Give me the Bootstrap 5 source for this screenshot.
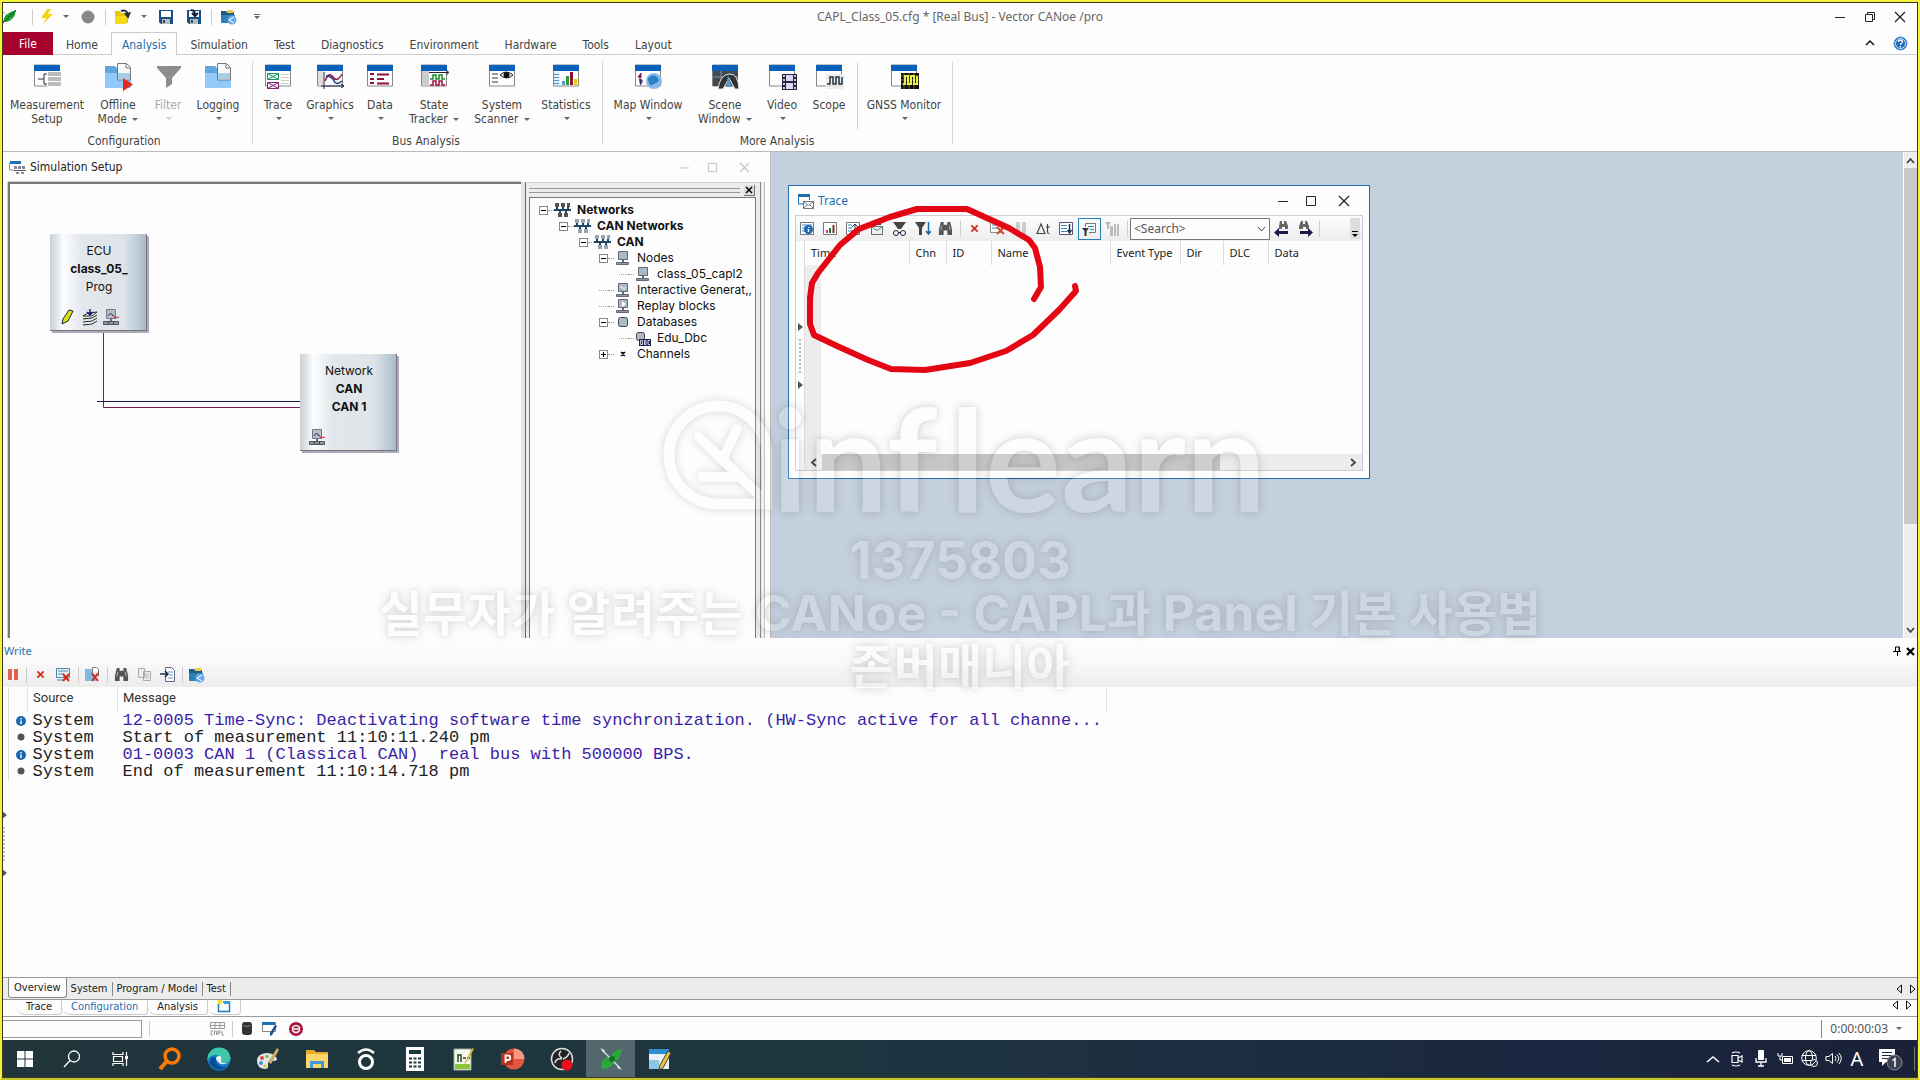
<!DOCTYPE html>
<html lang="en">
<head>
<meta charset="utf-8">
<meta name="viewport" content="width=device-width, initial-scale=1">
<title>CAPL_Class_05.cfg * [Real Bus] - Vector CANoe /pro</title>
<link href="https://cdn.jsdelivr.net/npm/bootstrap@5.3.0/dist/css/bootstrap.min.css" rel="stylesheet">
<style>
:root{--ui:"DejaVu Sans Condensed","DejaVu Sans",sans-serif;--win:"Noto Sans","Open Sans",sans-serif;--ink:#444;--blue:#1f6fae}
body{font-family:var(--ui);font-size:12px;line-height:14px;color:var(--ink);background:#fdfdfd;overflow:hidden}
button{background:none;border:0;padding:0;color:inherit;font:inherit;line-height:inherit}
svg{display:block;flex:none}
.shell{border:2px solid #f3f23c;border-bottom-color:#c4c52c;height:100vh}
.shell-in{border:1px solid #3b3b20}
.titlebar{height:29px;font-family:var(--win);padding-bottom:2px}
.titlebar .caption{font-size:12px;color:#666}
.winbtns{padding-right:2px}
.cell{width:23px;flex:none;display:flex;align-items:center;justify-content:center}
.cell-sm{width:16px}.cell-md{width:28px}.cell-lg{width:30px}.cell-xs{width:10px}.cell-pz{width:20px}
.vsep{width:6px;flex:none;display:flex;justify-content:center;align-self:center;height:16px}
.vsep::before{content:"";width:1px;background:#ccc}
.caret{width:0;height:0;border:3px solid transparent;border-top-color:#666;border-bottom:0;display:inline-block}
.rtabs{height:23px;border-bottom:1px solid #ccc}
.rtabs a{color:var(--ink);text-decoration:none;padding:5px 12px 0;height:23px;border:1px solid transparent;border-bottom:0}
.rtabs a.file{background:#a6002c;color:#fff;width:50px;padding:4px 0 0;text-align:center}
.rtabs a.on{color:var(--blue);background:#fdfdfd;border-color:#ccc;padding:5px 10px 0}
.ribbon{height:97px;border-bottom:1px solid #bbb}
.rgroup{position:relative;display:flex;flex-direction:column;padding:8px 8px 3px 0}
.rgroup.mid{padding-right:10px}
.rgroup.mid .glabel{padding-left:6px}
.rgroup.last{padding:8px 5px 3px 3px}
.rgroup::after{content:"";position:absolute;right:0;top:6px;bottom:7px;width:1px;background:#d8d8d8}
.rgroup .glabel{text-align:center;margin-top:auto}
.rbtn{display:flex;flex-direction:column;align-items:center;flex:none;height:66px}
.rbtn svg{margin:0 0 7px 3px;width:30px;height:28px}
.rbtn .caret{vertical-align:middle;margin-left:2px}
.rbtn .below{margin-top:5px}
.rbtn:disabled{color:#aaa}.rbtn:disabled .caret{border-top-color:#ccc}
.w44{width:44px}.w46{width:46px}.w50{width:50px}.w54{width:54px}.w62{width:62px}.w70{width:70px}.w74{width:74px}.w84{width:84px}.w88{width:88px}
.workspace{flex:487 1 0;min-height:0}
.simwin{flex:0 0 768px;border-right:1px solid #bbb;background:#fdfdfd}
.simhead{height:30px;padding-left:6px;color:#222}
.canvas{position:relative;width:513px;margin-left:5px;border-top:2px solid #777;border-left:2px solid #777;box-shadow:0 -1px #ccc,-1px 0 #ccc;flex:none}
.canvas>svg{position:absolute;left:0;top:0}
.blk{position:absolute;width:97px;height:97px;font-family:Inter,sans-serif;font-size:12px;line-height:18px;color:#111;text-align:center;padding:8px 0 0 2px;background:linear-gradient(90deg,#c9cfd4,#fcfdfe 14%,#e2e7ec 34%,#dfe4ea 76%,#b8c8d5 94%,#a9b9c6);border-right:1px solid #777;border-bottom:1px solid #777;box-shadow:2px 2px #aab}
.blk svg{position:absolute;bottom:4px}
.blk .i1{left:9px}.blk .i2{left:32px}.blk .i3{left:53px}
.ecu{left:40px;top:50px}.net{left:290px;top:170px}
.side{width:235px;background:#ececec;border-left:1px solid #666;margin-left:4px;box-shadow:-4px 0 #e3e3e3;padding:0 0 0 3px;border-top:1px solid #ccc}
.side-edge{border-right:1px solid #888;box-shadow:3px 0 #eee,4px 0 #bbb}
.grip{height:14px;padding-right:5px}
.grip i{flex:1;height:5px;border-top:1px solid #999;border-bottom:1px solid #999;margin-right:4px}
.grip button{width:11px;height:11px;background:#ddd;border-right:1px solid #777;border-bottom:1px solid #777}
.tree{background:#fdfdfd;border:1px solid #777;border-bottom:0;flex:1;font-family:Inter,sans-serif;line-height:16px;color:#111;padding-top:4px;white-space:nowrap;overflow:hidden}
.tree ul{list-style:none;margin:0;padding:0 0 0 20px}
.tree>ul{padding-left:9px}
.trow{display:flex;align-items:center;height:16px}
.exp{width:9px;height:9px;flex:none;border:1px solid #888;position:relative;background:#fff}
.exp::before{content:"";position:absolute;left:1px;right:1px;top:3px;height:1px;background:#000}
.exp.plus::after{content:"";position:absolute;top:1px;bottom:1px;left:3px;width:1px;background:#000}
.noexp{width:9px;flex:none;border-top:1px dotted #aaa}
.dots{width:6px;flex:none;border-top:1px dotted #999}
.trow svg{width:17px;height:16px;margin:0 6px 0 0}
.tree b{font-weight:700}
.mdi{position:relative;background:#c5d0df;min-width:0}
.vscroll{width:14px;background:#eee;border-left:1px solid #fff;flex:none}
.vscroll i{flex:0 0 356px;background:#c9c9c9}
.vscroll button{height:16px;display:flex;align-items:center;justify-content:center}
.tracewin{position:absolute;left:17px;top:33px;width:582px;height:294px;border:1px solid #1f6fae;background:#fdfdfd;padding:0 6px 7px;font-family:var(--win);font-size:11px}
.tracehead{height:29px;color:var(--blue);font-size:12px;padding-left:3px}
.tracebody{flex:1;border:1px solid #ccd;min-height:0}
.ttool{height:25px;background:linear-gradient(#fdfdfd,#ededed)}
.ttool .tgl{border:1px solid #2580b8;height:22px}
.ttool select{width:140px;height:22px;border:1px solid #777;border-radius:0;background:#fdfdfd;color:#555;font-size:12px;padding:0 3px;appearance:none;font-family:var(--win)}
.selwrap{position:relative}.selwrap svg{position:absolute;right:4px;top:8px;pointer-events:none}
.ovf{width:10px;height:21px;background:#ddd;display:flex;align-items:flex-end;justify-content:center;margin-right:2px}
.gripcol{width:9px;border-right:1px solid #ddd;flex:none}
.gripdots{height:34px;border-left:2px dotted #bbb}
.tbl-trace{table-layout:fixed;border-collapse:collapse;color:#222;width:100%}
.tbl-trace th{font-weight:400;height:24px;padding:0 6px;border-right:1px solid #ddd;white-space:nowrap}
.tbl-trace th:last-child{border-right:0}
.gutter{width:16px;background:#ececec}
.hscroll{height:16px;background:#ececec}
.hscroll i{flex:0 0 398px;background:#c6c6c6}
.hscroll button{width:17px;height:16px;display:flex;align-items:center;justify-content:center}
.ink{position:absolute;left:0;top:0;pointer-events:none;z-index:3}
.wm{position:absolute;left:0;right:0;top:398px;z-index:4;pointer-events:none;opacity:.15;color:#fff;text-shadow:0 0 12px #000,0 0 4px #555;font:700 48px/53px Inter,"Noto Sans CJK KR",sans-serif}
.wm .logo{height:133px;padding-left:10px}
.wm .logo svg{filter:drop-shadow(0 0 5px #000);overflow:visible}
.wm .word{font:700 142px/112px Lato,sans-serif;font-variant-ligatures:none;gap:12px}
.wm .num{font-size:52px}
.wm .lat{font-size:50px;line-height:1}
.writepane{flex:339 1 0;min-height:0;overflow:hidden}
.writehead{background:linear-gradient(#fdfdfd,#f9f9f9 50%,#ececec)}
.writehead .wt{height:24px;padding:2px 2px 0 1px;color:var(--blue);font:11px/16px var(--win)}
.wtool{height:25px}
.wlog{border-collapse:collapse;font-family:"Liberation Mono",monospace;font-size:17px;line-height:17px;color:#222;margin-left:5px;border-left:1px solid #ddd}
.wlog th{font:400 13px/22px Roboto,sans-serif;color:#333;border-right:1px solid #e2e2e2;height:25px;vertical-align:top}
.wlog th,.wlog td{padding:0 5px;white-space:pre}
.wlog th.src{width:90px}
.wlog td:first-child,.wlog th:first-child{padding:0 1px 0 7px;width:19px}
.wlog .info{color:#3a1fa8}
.btabs{height:23px;background:#ececec;border-top:1px solid #999;border-bottom:1px solid #999;font-size:11px;color:#222}
.btabs a,.dtabs a{color:inherit;text-decoration:none}
.btabs a{border-right:1px solid #888;padding:0 4px;line-height:14px}
.btabs a.on{background:#fdfdfd;border:1px solid #888;border-top:0;border-radius:0 0 3px 3px;height:20px;line-height:20px;margin-left:5px;padding:0 5px;align-self:flex-start}
.dtabs{height:17px;border-bottom:1px solid #999;font-size:11px;color:#222;flex:none;padding-left:14px}
.dtabs a{padding:0 9px;line-height:14px;height:15px;border-bottom:1px solid #ccc;border-right:1px solid #ccc;border-radius:0 0 4px 8px}
.dtabs a.on{color:var(--blue)}
.pager{gap:6px}
.statusbar{height:23px;flex:none}
.statusbar input{width:139px;height:18px;border:1px solid #999;border-left:0;background:#fdfdfd;padding:0 4px}
.clock{border-left:1px solid #888;padding:0 15px 0 8px;height:18px;font:12px/18px var(--win);color:#555}
.taskbar{height:37px;flex:none;background:linear-gradient(90deg,#20363b,#1e3540 45%,#1a2740 80%,#1a2138)}
.taskbar .tb{width:49px;height:37px;display:flex;align-items:center;justify-content:center}
.taskbar .tb:first-child{width:44px}
.taskbar .tb.on{background:#53686c}
.tray{color:#fff;font:20px/36px "Noto Sans",sans-serif;padding-right:2px}
.tray .cell{width:24px}
.tray .note{width:46px;border-right:1px solid #777;padding-right:4px}
</style>
<script src="https://cdn.jsdelivr.net/npm/bootstrap@5.3.0/dist/js/bootstrap.bundle.min.js"></script>
</head>
<body>
<svg width="0" height="0" class="position-absolute" aria-hidden="true">
<defs>
<symbol id="win" viewBox="0 0 30 28"><path d="M.5 2h25v21H.5z" fill="#fdfdfd" stroke="#888"/><path d="M0 2h26v6H0z" fill="#0a61bb"/></symbol>
<symbol id="folder" viewBox="0 0 30 28"><path d="M0 3h10l3 3h13v19H0z" fill="#5ea7dc"/><path d="M0 10h26v15H0z" fill="#92c9f8"/><path d="M12.500.5h9l4 4V17h-13z" fill="#f6fafc" stroke="#777"/><path d="M13 10h12v6H13z" fill="#a6cfe2"/><path d="M21 .5V5h4.500" fill="none" stroke="#777"/></symbol>
<symbol id="netico" viewBox="0 0 17 16"><path d="M1 1h4v4H1zM7 1h4v4H7zM13 1h3v4h-3zM4 11h4v4H4zM10 11h4v4h-4z" fill="#99a5ae"/><path d="M0 8h17M3 5v3M9 5v3M14 5v3M6 8v3M12 8v3" stroke="#1f4765" stroke-width="2"/></symbol>
<symbol id="netdark" viewBox="0 0 17 16"><path d="M1 1h4v4H1zM7 1h4v4H7zM13 1h3v4h-3zM4 11h4v4H4zM10 11h4v4h-4z" fill="#555"/><path d="M0 8h17M3 5v3M9 5v3M14 5v3M6 8v3M12 8v3" stroke="#1f4765" stroke-width="2"/></symbol>
<symbol id="pc" viewBox="0 0 17 16"><path d="M4.500 1.500h9v8h-9z" fill="#a9bac6" stroke="#667"/><path d="M8 10h2v3H8z" fill="#667"/><path d="M2.500 12.500h12v2h-12z" fill="#8b979f" stroke="#667"/></symbol>
<symbol id="pcred" viewBox="0 0 17 18"><path d="M3.500 1.500h9v9h-9z" fill="#b4bec6" stroke="#778"/><path d="M7 11h2v3H7z" fill="#667"/><path d="M.500 13.500h15v3H.500z" fill="#8b979f" stroke="#556"/><path d="M5.500 14v2M10.500 14v2" stroke="#445"/><path d="M5 8q3-5 5 0" fill="none" stroke="#334"/><path d="M10 7l2 3 4-1" fill="none" stroke="#c22"/></symbol>
<symbol id="bino" viewBox="0 0 16 16"><path d="M3 1h3v3h4V1h3l2 8v6h-5v-5H6v5H1V9z" fill="#555"/><path d="M4 5l-1 5M12 5l1 5" stroke="#bbb"/></symbol>
<symbol id="redx" viewBox="0 0 10 10"><path d="M1.500 1.500l7 7M8.500 1.500l-7 7" stroke="#d92b1c" stroke-width="2"/></symbol>
<symbol id="disk" viewBox="0 0 16 16"><path d="M1 1h14v14H3l-2-2z" fill="#174f86"/><path d="M3 2h10v6H3z" fill="#fff"/><path d="M4 10h8v5H4z" fill="#bbb"/><path d="M5 11h2v3H5z" fill="#174f86"/></symbol>
<symbol id="fold2" viewBox="0 0 17 16"><path d="M1 2h5l1 1h7v11H1z" fill="#245b80"/><path d="M7 1h6v3H7z" fill="#e5c94f"/><path d="M1 6h14v8H1z" fill="#2b80b5"/><circle cx="12" cy="11" r="4.500" fill="#69abe8"/><path d="M9 11l5-3M9 11l5 3" stroke="#fff"/></symbol>
<symbol id="min" viewBox="0 0 12 12"><path d="M1 6.500h10" stroke="currentColor"/></symbol>
<symbol id="max" viewBox="0 0 12 12"><path d="M1.500 1.500h9v9h-9z" fill="none" stroke="currentColor"/></symbol>
<symbol id="cls" viewBox="0 0 12 12"><path d="M1 1l10 10M11 1L1 11" stroke="currentColor" stroke-width="1.300"/></symbol>
<symbol id="lt" viewBox="0 0 8 10"><path d="M6.500 1v8L2 5z" fill="none" stroke="#111"/></symbol>
<symbol id="rt" viewBox="0 0 8 10"><path d="M1.500 1v8L6 5z" fill="none" stroke="#111"/></symbol>
<symbol id="gr" viewBox="0 0 5 8"><path d="M0 0l5 4-5 4z" fill="#555"/></symbol>
</defs>
</svg>
<div class="shell">
<div class="shell-in d-flex flex-column h-100 position-relative">

<header class="titlebar d-flex align-items-center position-relative flex-shrink-0">
 <button class="cell-sm" aria-label="CANoe"><svg width="14" height="16"><path d="M0 13Q1 4 13 1 12 11 3 13z" fill="#1d9a2c"/><path d="M0 3l13 11" stroke="#9aa" stroke-dasharray="3 6"/><path d="M0 14L13 1" stroke="#0b5e17"/></svg></button>
 <span class="cell-xs"></span><span class="vsep ms-n1"></span>
 <button class="cell" aria-label="Start"><svg width="14" height="16"><path d="M7 0h4L8 5h5L3 15l3-6H1z" fill="#f6d31a"/></svg></button>
 <span class="cell-sm d-flex justify-content-center"><i class="caret"></i></span>
 <button class="cell-md d-flex justify-content-center" aria-label="Stop"><svg width="14" height="14"><circle cx="7" cy="7" r="6.500" fill="#8a8a8a"/></svg></button>
 <span class="vsep"></span>
 <button class="cell-md d-flex justify-content-center" aria-label="Open"><svg width="17" height="16"><path d="M1 2h5l1 2h7v10H1z" fill="#e9c400"/><path d="M1 7h13l-2 8H1z" fill="#f5da1c"/><path d="M7 2q6-2 7 4M11 4l3 4 2-5" fill="none" stroke="#234" stroke-width="2"/></svg></button>
 <span class="cell-sm d-flex justify-content-center"><i class="caret"></i></span>
 <button class="cell-md d-flex justify-content-center" aria-label="Save"><svg width="16" height="16"><use href="#disk"/></svg></button>
 <button class="cell-md d-flex justify-content-center" aria-label="Save as"><svg width="16" height="16"><use href="#disk"/><path d="M5 1q4 0 4 5M6 4l3 3 3-3" fill="none" stroke="#123" stroke-width="2"/></svg></button>
 <span class="vsep"></span>
 <button class="cell-md d-flex justify-content-center" aria-label="Share folder"><svg width="17" height="16"><use href="#fold2"/></svg></button>
 <button class="cell-lg d-flex justify-content-center" aria-label="Customize"><svg width="8" height="8"><path d="M1 1.500h6" stroke="#666"/><path d="M1 3h6L4 6z" fill="#666"/></svg></button>
 <span class="caption position-absolute start-50 translate-middle-x">CAPL_Class_05.cfg * [Real Bus] - Vector CANoe /pro</span>
 <span class="ms-auto d-flex text-dark winbtns">
  <button class="cell-lg d-flex justify-content-center" aria-label="Minimize"><svg width="12" height="12"><use href="#min"/></svg></button>
  <button class="cell-lg d-flex justify-content-center" aria-label="Restore"><svg width="12" height="12"><path d="M1.500 3.500h7v7h-7zM3.500 3V1.500h7v7H9" fill="none" stroke="currentColor"/></svg></button>
  <button class="cell-lg d-flex justify-content-center" aria-label="Close"><svg width="12" height="12"><use href="#cls"/></svg></button>
 </span>
</header>

<nav class="rtabs d-flex flex-shrink-0">
 <a href="#" class="file">File</a><a href="#">Home</a><a href="#" class="on">Analysis</a><a href="#">Simulation</a><a href="#">Test</a><a href="#">Diagnostics</a><a href="#">Environment</a><a href="#">Hardware</a><a href="#">Tools</a><a href="#">Layout</a>
 <span class="ms-auto d-flex align-items-center winbtns">
  <button class="cell-lg d-flex justify-content-center" aria-label="Collapse ribbon"><svg width="10" height="8"><path d="M1 6l4-4 4 4" fill="none" stroke="#111" stroke-width="1.500"/></svg></button>
  <button class="cell-lg d-flex justify-content-center" aria-label="Help"><svg width="15" height="15"><circle cx="7.500" cy="7.500" r="6.500" fill="#1d6bb8" stroke="#4e93d4"/><circle cx="7.500" cy="7.500" r="5" fill="none" stroke="#cfe3f5"/><path d="M5.500 6q0-2 2-2t2 2q0 1-2 2v1M7.500 10v1.500" fill="none" stroke="#fff" stroke-width="1.300"/></svg></button>
 </span>
</nav>

<div class="ribbon d-flex flex-shrink-0">
 <section class="rgroup">
  <div class="d-flex">
   <button class="rbtn w88"><svg><use href="#win"/><path d="M13 8h14v18H13z" fill="#fdfdfd"/><path d="M14 9h13v4H14zM14 14h13v4H14zM14 19h13v4H14z" fill="#bbb"/><path d="M4 16h6M10 11v10h3M10 11h3" fill="none" stroke="#234"/></svg><span>Measurement<br>Setup</span></button>
   <button class="rbtn w54"><svg><use href="#folder"/><path d="M18 15l10 6.500-10 6.500z" fill="#e5261b"/></svg><span>Offline<br>Mode <i class="caret"></i></span></button>
   <button class="rbtn w46" disabled><svg><path d="M2 3h24v2l-9 10v6l-6 4V15L2 5z" fill="#8d8d8d"/></svg><span>Filter</span><i class="caret below"></i></button>
   <button class="rbtn w54"><svg><use href="#folder"/></svg><span>Logging</span><i class="caret below"></i></button>
  </div>
  <div class="glabel">Configuration</div>
 </section>
 <section class="rgroup mid">
  <div class="d-flex">
   <button class="rbtn w50"><svg><use href="#win"/><path d="M2.500 10.500h11v6h-11zM2.500 10.500l11 6M13.500 10.500l-11 6" fill="#eafaf2" stroke="#1f9363"/><path d="M2.500 19.500h11v6h-11zM2.500 19.500l11 6M13.500 19.500l-11 6" fill="#fbeefb" stroke="#7d2670"/><path d="M16 11.500h8M16 14.500h8M16 17.500h8M16 20.500h8" stroke="#ccc"/></svg><span>Trace</span><i class="caret below"></i></button>
   <button class="rbtn w54"><svg><use href="#win"/><path d="M1 8h5v15H1z" fill="#ddd"/><path d="M7 9v17M4 23h23M24 21l3 2-3 2" fill="none" stroke="#224"/><path d="M8 18q4-10 8-4t9-3" fill="none" stroke="#9a1240" stroke-width="1.500"/><path d="M9 13q6 0 8 5t8 0" fill="none" stroke="#1c3a78" stroke-width="1.500"/></svg><span>Graphics</span><i class="caret below"></i></button>
   <button class="rbtn w46"><svg><use href="#win"/><path d="M3 11h4M3 16h4M3 20h4M10 11.500h12M10 16h7M10 20.500h12" stroke="#8c0f3c" stroke-width="2.200"/></svg><span>Data</span><i class="caret below"></i></button>
   <button class="rbtn w62"><svg><use href="#win"/><path d="M1 8h7v15H1z" fill="#ccc"/><path d="M8 9.500h19M25 7l3 2.500-3 2.500" fill="none" stroke="#223"/><path d="M9 16h3v-4h3v4h3v-4h3v4h3" fill="none" stroke="#168a28" stroke-width="1.500"/><path d="M9 22h3v-4h3v4h3v-4h3v4h3" fill="none" stroke="#9a1240" stroke-width="1.500"/></svg><span>State<br>Tracker <i class="caret"></i></span></button>
   <button class="rbtn w74"><svg><use href="#win"/><path d="M3 10h6v2H3zM3 14h6v2H3zM3 18h6v2H3z" fill="#999"/><path d="M11 12q6-6 13 0-6 6-13 0z" fill="#eee" stroke="#222"/><circle cx="17.500" cy="12" r="3" fill="#111"/></svg><span>System<br>Scanner <i class="caret"></i></span></button>
   <button class="rbtn w54"><svg><use href="#win"/><path d="M1 9h6v13H1z" fill="#e2f0fa"/><path d="M1 11.500h5M1 14.500h5M1 17.500h5M1 20.500h5" stroke="#4a92c8"/><path d="M9 18h3v4H9z" fill="#4c9bd2"/><path d="M13 13h3v9h-3z" fill="#2d9b32"/><path d="M17 9h3v13h-3z" fill="#8c0f3c"/><path d="M21 16h3v6h-3z" fill="#eec911"/></svg><span>Statistics</span><i class="caret below"></i></button>
  </div>
  <div class="glabel">Bus Analysis</div>
 </section>
 <section class="rgroup last">
  <div class="d-flex">
   <button class="rbtn w84"><svg><use href="#win"/><path d="M6 10l-3 4 3 1zM4 16q4 0 3 3t-2 3" fill="#1c3a78" stroke="#a12550"/><circle cx="19" cy="18" r="8" fill="#85bbeb"/><path d="M13 15q5-5 9-1t-1 6-4 3q-4-2-4-8z" fill="#2e7fbe"/></svg><span>Map Window</span><i class="caret below"></i></button>
   <button class="rbtn w70"><svg><use href="#win"/><path d="M1 8h25v15H1z" fill="#444b50"/><path d="M1 14h25M9 8v15" stroke="#89929a"/><path d="M6 26Q8 12 17 11t10 15h-4l-6-11-6 11z" fill="#333" stroke="#e2e7ea"/><path d="M16 12l-2 12h6z" fill="#5698c9"/></svg><span>Scene<br>Window <i class="caret"></i></span></button>
   <button class="rbtn w44"><svg><use href="#win"/><path d="M13 11h15v16H13z" fill="#2b2540"/><path d="M17 12h7v6h-7zM17 20h7v6h-7z" fill="#dcd8f5"/><path d="M15 12v14M26 12v14" stroke="#fff" stroke-width="1.500" stroke-dasharray="2 2"/></svg><span>Video</span><i class="caret below"></i></button>
   <button class="rbtn w50"><svg><use href="#win"/><path d="M10 11h18v15H10z" fill="#f1f1f4"/><path d="M10 15h18M10 19h18M10 23h18M14 11v15M19 11v15M24 11v15" stroke="#ddd"/><path d="M11 21h3v-7h3v7h3v-7h3v7h3v-7" fill="none" stroke="#234" stroke-width="1.500"/></svg><span>Scope</span></button>
   <span class="vsep h-auto align-self-stretch"></span>
   <button class="rbtn w88"><svg><use href="#win"/><path d="M10 10h18v16H10z" fill="#111"/><path d="M10 13h18M10 17h18M10 21h18M13 10v16M18 10v16M23 10v16" stroke="#656b30"/><path d="M12 21h2v-8h3v8h3v-8h3v8h3v-8" fill="none" stroke="#e9f04c" stroke-width="2"/></svg><span>GNSS Monitor</span><i class="caret below"></i></button>
  </div>
  <div class="glabel">More Analysis</div>
 </section>
</div>

<main class="workspace d-flex">
 <section class="simwin d-flex flex-column">
  <div class="simhead d-flex align-items-center flex-shrink-0">
   <svg width="17" height="16"><path d="M1 2h11v3H1z" fill="#1f6fae"/><path d="M.500 4v7H5" fill="none" stroke="#888"/><path d="M5 7h3v3H5zM9 7h3v3H9zM13 7h3v3h-3zM7 13h3v2H7zM12 13h3v2h-3z" fill="#889"/><path d="M5 11.500h12" stroke="#556"/></svg>
   <span class="ms-1">Simulation Setup</span>
   <span class="ms-auto d-flex text-black-50 opacity-50 pe-2 me-1">
    <button class="cell-md d-flex justify-content-center" aria-label="Minimize"><svg width="11" height="11"><use href="#min"/></svg></button>
    <button class="cell-md d-flex justify-content-center me-1" aria-label="Maximize"><svg width="11" height="11"><use href="#max"/></svg></button>
    <button class="cell-md d-flex justify-content-center" aria-label="Close"><svg width="11" height="11"><use href="#cls"/></svg></button>
   </span>
  </div>
  <div class="d-flex flex-fill">
   <div class="canvas">
    <svg width="400" height="300"><path d="M93.500 149v74.500H290" fill="none" stroke="#7a1a52"/><path d="M87 217.500h203" stroke="#1a1a4a"/></svg>
    <div class="blk ecu">ECU<br><b>class_05_</b><br>Prog
     <svg width="17" height="18" class="i1"><path d="M3 16l1-5 6-9 4 1-5 10z" fill="#d9e021" stroke="#222"/></svg>
     <svg width="17" height="18" class="i2"><path d="M1 8l5-3 9-1-5 4zM1 11l9-1 5-3M1 14l9-1 5-3M1 17l9-1 5-3" fill="#fff" stroke="#222"/><path d="M8 1v5M5 4l3 3 3-3" stroke="#1b1b70" fill="none" stroke-width="1.500"/></svg>
     <svg width="17" height="18" class="i3"><use href="#pcred"/></svg></div>
    <div class="blk net">Network<br><b>CAN</b><br><b>CAN 1</b><svg width="17" height="18" class="i1"><use href="#pcred"/></svg></div>
   </div>
   <div class="side-edge d-flex">
   <aside class="side d-flex flex-column">
    <div class="grip d-flex align-items-center"><i></i><button aria-label="Close pane"><svg width="9" height="9"><path d="M2 2l6 6M8 2L2 8" stroke="#000" stroke-width="1.500"/></svg></button></div>
    <div class="tree me-1">
     <ul><li><div class="trow"><i class="exp"></i><i class="dots"></i><svg><use href="#netdark"/></svg><b>Networks</b></div>
      <ul><li><div class="trow"><i class="exp"></i><i class="dots"></i><svg><use href="#netico"/></svg><b>CAN Networks</b></div>
       <ul><li><div class="trow"><i class="exp"></i><i class="dots"></i><svg><use href="#netico"/></svg><b>CAN</b></div>
        <ul>
         <li><div class="trow"><i class="exp"></i><i class="dots"></i><svg><use href="#pc"/></svg>Nodes</div>
          <ul><li><div class="trow"><i class="noexp"></i><i class="dots"></i><svg><use href="#pc"/></svg>class_05_capl2</div></li></ul></li>
         <li><div class="trow"><i class="noexp"></i><i class="dots"></i><svg><use href="#pc"/><path d="M6 6q2-3 3 0t3-1" fill="none" stroke="#fff"/></svg>Interactive Generat,,</div></li>
         <li><div class="trow"><i class="noexp"></i><i class="dots"></i><svg><use href="#pc"/><path d="M8 3l4 3-4 3z" fill="#fff"/></svg>Replay blocks</div></li>
         <li><div class="trow"><i class="exp"></i><i class="dots"></i><svg><rect x="4.500" y="3.500" width="9" height="9" rx="2" fill="#a9bac6" stroke="#445"/></svg>Databases</div>
          <ul><li><div class="trow"><i class="noexp"></i><i class="dots"></i><svg><rect x="2.500" y="2.500" width="8" height="8" rx="2" fill="#a9bac6" stroke="#445"/><path d="M5 9h12v7H5z" fill="#1c2450"/><path d="M6.500 10.500v4h2v-4zM10.500 10.500v4h1.500v-4zM16 10.500h-2v4h2" fill="none" stroke="#ccd"/></svg>Edu_Dbc</div></li></ul></li>
         <li><div class="trow"><i class="exp plus"></i><i class="dots"></i><svg><path d="M7 6l4 4M11 6l-4 4M9 6v4" stroke="#111" stroke-width="1.500"/></svg>Channels</div></li>
        </ul></li></ul></li></ul></li></ul>
    </div>
   </aside></div>
  </div>
 </section>

 <section class="mdi flex-fill">
  <div class="tracewin d-flex flex-column">
   <div class="tracehead d-flex align-items-center flex-shrink-0">
    <svg width="16" height="16"><path d="M0 1h12v3H0z" fill="#1f6fae"/><path d="M.500 4v7H5M11.500 4v3" fill="none" stroke="#1f6fae"/><path d="M5.500 8.500h10v7h-10zM5.500 8.500l5 4 5-4M5.500 15.500l4-4M15.500 15.500l-4-4" fill="#fff" stroke="#777"/></svg>
    <span class="ms-1">Trace</span>
    <span class="ms-auto d-flex text-dark pe-1">
     <button class="cell-md d-flex justify-content-center" aria-label="Minimize"><svg width="12" height="12"><use href="#min"/></svg></button>
     <button class="cell-md d-flex justify-content-center" aria-label="Maximize"><svg width="12" height="12"><use href="#max"/></svg></button>
     <button class="cell-lg d-flex justify-content-center ms-1" aria-label="Close"><svg width="12" height="12"><use href="#cls"/></svg></button>
    </span>
   </div>
   <div class="tracebody d-flex flex-column">
    <div class="ttool d-flex align-items-center flex-shrink-0">
     <button class="cell" aria-label="Details"><svg width="15" height="15"><path d="M.500 1.500h13v12H.500z" fill="#fff" stroke="#777"/><path d="M2 4h10M2 7h4M2 10h4" stroke="#3a82bd"/><circle cx="8.500" cy="8.500" r="4.500" fill="#1668b0"/><path d="M8.500 6v1M8.500 8v3" stroke="#fff" stroke-width="1.500"/></svg></button>
     <button class="cell" aria-label="Statistics"><svg width="15" height="15"><path d="M.500 1.500h13v12H.500z" fill="#fff" stroke="#777"/><path d="M4 12v-3" stroke="#e29" stroke-width="2"/><path d="M7 12V7" stroke="#272" stroke-width="2"/><path d="M10.500 12V4" stroke="#822" stroke-width="2"/></svg></button>
     <button class="cell" aria-label="Difference"><svg width="15" height="15"><path d="M.500 1.500h13v12H.500z" fill="#fff" stroke="#777"/><path d="M2 4h4M2 7h4M2 10h4" stroke="#3a82bd"/><path d="M6 6l3-3 3 3M9 3v8M6 9l3 3 3-3" fill="none" stroke="#234"/></svg></button>
     <button class="cell" aria-label="Send"><svg width="15" height="15"><path d="M2.500 5.500h11v8h-11zM2.500 5.500l5.500 4 5.500-4" fill="#eee" stroke="#577"/><path d="M3 1h9v3H3z" fill="#444"/></svg></button>
     <button class="cell" aria-label="Predefined filter"><svg width="15" height="16"><path d="M1 1h13L9 8H6z" fill="#444"/><circle cx="4" cy="12" r="2.500" fill="none" stroke="#224"/><circle cx="11" cy="12" r="2.500" fill="none" stroke="#224"/><path d="M6 11.500h3" stroke="#224"/></svg></button>
     <button class="cell" aria-label="Filter"><svg width="16" height="15"><path d="M0 1h11L7 7v7H4V7z" fill="#444"/><path d="M13.500 1v11M11 10l2.500 3 2.500-3" fill="none" stroke="#1668b0" stroke-width="1.500"/></svg></button>
     <button class="cell" aria-label="Find"><svg width="15" height="15"><use href="#bino"/></svg></button>
     <span class="vsep"></span>
     <button class="cell" aria-label="Clear"><svg width="9" height="9"><use href="#redx"/></svg></button>
     <button class="cell" aria-label="Clear window"><svg width="16" height="15"><path d="M.500 1.500h11v10H.500z" fill="#fff" stroke="#888"/><path d="M2 4h6M2 7h5" stroke="#3a82bd"/><path d="M7 6l7 7M14 6l-7 7" stroke="#d9482c" stroke-width="2"/></svg></button>
     <button class="cell" aria-label="Pause" disabled><svg width="10" height="13"><path d="M0 0h4v13H0zM6 0h4v13H6z" fill="#ccc"/></svg></button>
     <button class="cell" aria-label="Delta time"><svg width="15" height="13"><path d="M1 11.500L5 2l4 9.500z" fill="none" stroke="#444" stroke-width="1.200"/><path d="M11.500 2v8q0 1.500 2 1.500M10 5h4" fill="none" stroke="#444" stroke-width="1.200"/></svg></button>
     <button class="cell" aria-label="Scroll"><svg width="15" height="14"><path d="M.500.500h13v12H.500z" fill="#fff" stroke="#557"/><path d="M2 3.500h6M2 6.500h6M2 9.500h6" stroke="#3a82bd"/><path d="M10.500 2v8M8.500 8l2 3 2-3" fill="none" stroke="#234" stroke-width="1.500"/></svg></button>
     <button class="cell tgl" aria-label="Column filter"><svg width="15" height="14"><path d="M3.500 5V1.500h10v9H7" fill="none" stroke="#777"/><path d="M6 4.500h6M8 7.500h4" stroke="#3a82bd"/><path d="M0 6h7L4.500 9v5h-2V9z" fill="#333"/></svg></button>
     <button class="cell" aria-label="Columns" disabled><svg width="15" height="14"><path d="M0 0h6L4 3v4H2V3zM5 4h3v10H5zM9 2h2v12H9zM12 2h2v12h-2z" fill="#bbb"/></svg></button>
     <span class="vsep"></span>
     <div class="selwrap"><select aria-label="Search"><option>&lt;Search&gt;</option></select><svg width="9" height="7"><path d="M1 1l3.500 4L8 1" fill="none" stroke="#444"/></svg></div>
     <button class="cell" aria-label="Find previous"><svg width="16" height="16"><path d="M6 0h2v3h2V0h2l2 5v3h-3V6H8v2H5V5z" fill="#666"/><path d="M0 11.500L5 7v3h9v3H5v3z" fill="#1c1c48"/></svg></button>
     <button class="cell" aria-label="Find next"><svg width="16" height="16"><path d="M4 0h2v3h2V0h2l2 5v3H9V6H6v2H2V5z" fill="#666"/><path d="M16 11.500L11 7v3H3v3h8v3z" fill="#1c1c48"/></svg></button>
     <span class="vsep"></span>
     <button class="ovf ms-auto" aria-label="More"><svg width="8" height="9"><path d="M1 1.500h6" stroke="#000"/><path d="M1 4h6L4 7z" fill="#000"/></svg></button>
    </div>
    <div class="d-flex flex-fill">
     <div class="gripcol d-flex flex-column align-items-center justify-content-center gap-2"><svg width="5" height="8"><use href="#gr"/></svg><span class="gripdots"></span><svg width="5" height="8"><use href="#gr"/></svg></div>
     <div class="d-flex flex-column flex-fill">
      <table class="tbl-trace"><colgroup><col style="width:104px"><col style="width:37px"><col style="width:45px"><col style="width:119px"><col style="width:70px"><col style="width:43px"><col style="width:45px"><col></colgroup>
       <thead><tr><th>Time</th><th>Chn</th><th>ID</th><th>Name</th><th>Event Type</th><th>Dir</th><th>DLC</th><th>Data</th></tr></thead></table>
      <div class="gutter flex-fill"></div>
      <div class="hscroll d-flex"><button aria-label="Scroll left"><svg width="7" height="9"><path d="M6 1L2 4.500 6 8" fill="none" stroke="#444" stroke-width="1.800"/></svg></button><i></i><button class="ms-auto" aria-label="Scroll right"><svg width="7" height="9"><path d="M1 1l4 3.500L1 8" fill="none" stroke="#444" stroke-width="1.800"/></svg></button></div>
     </div>
    </div>
   </div>
  </div>
 </section>
 <div class="vscroll d-flex flex-column"><button aria-label="Scroll up"><svg width="9" height="7"><path d="M1 6l3.500-4L8 6" fill="none" stroke="#444" stroke-width="1.800"/></svg></button><i></i><button class="mt-auto" aria-label="Scroll down"><svg width="9" height="7"><path d="M1 1l3.500 4L8 1" fill="none" stroke="#444" stroke-width="1.800"/></svg></button></div>
</main>

<section class="writepane d-flex flex-column">
 <div class="writehead">
  <div class="wt d-flex align-items-center"><span>Write</span>
   <button class="ms-auto" aria-label="Pin"><svg width="9" height="10"><path d="M2.500 5V1h4v4M0 5.500h8M4.500 6v4M6 1v4" fill="none" stroke="#000"/></svg></button>
   <button class="ms-1" aria-label="Close"><svg width="9" height="9"><path d="M1 1l7 7M8 1L1 8" stroke="#000" stroke-width="2.200"/></svg></button></div>
  <div class="wtool d-flex align-items-center">
   <button class="cell cell-pz" aria-label="Pause"><svg width="10" height="11"><path d="M0 0h4v11H0zM6 0h4v11H6z" fill="#e0604f"/></svg></button>
   <span class="vsep"></span>
   <button class="cell" aria-label="Clear"><svg width="9" height="9"><use href="#redx"/></svg></button>
   <button class="cell" aria-label="Clear window"><svg width="17" height="15"><path d="M1.500 1.500h13v9h-13z" fill="#e8f2f8" stroke="#4b87a8"/><path d="M3 4h10M3 7h6M2 13h6" stroke="#4b87a8"/><path d="M8 7l6 7M14 7l-6 7" stroke="#d92b1c" stroke-width="2"/></svg></button>
   <span class="vsep"></span>
   <button class="cell" aria-label="Clear log"><svg width="17" height="15"><path d="M1 2h6l1 2h4v10H1z" fill="#7fb9e6"/><path d="M8.500.500h4l2 2V9h-6z" fill="#fff" stroke="#777"/><path d="M8 6l6 8M14 6l-6 8" stroke="#d92b1c" stroke-width="2"/></svg></button>
   <span class="vsep"></span>
   <button class="cell" aria-label="Find"><svg width="15" height="15"><use href="#bino"/></svg></button>
   <button class="cell" aria-label="Copy" disabled><svg width="15" height="15"><path d="M1.500 1.500h6v9h-6zM6.500 4.500h7v9h-7z" fill="#eee" stroke="#aaa"/><path d="M8 7h4M8 9h4M8 11h4" stroke="#bbb"/></svg></button>
   <button class="cell" aria-label="Export"><svg width="16" height="15"><path d="M5.500.500h6l3 3v11h-9z" fill="#fff" stroke="#668"/><path d="M8 5h5M9 8h4M8 11h5" stroke="#5b9cbf"/><path d="M0 7h8M5 4l3 3-3 3" fill="none" stroke="#234" stroke-width="1.500"/></svg></button>
   <span class="vsep"></span>
   <button class="cell" aria-label="Share folder"><svg width="17" height="16"><use href="#fold2"/></svg></button>
  </div>
 </div>
 <div class="d-flex flex-fill position-relative">
  <table class="wlog align-self-start">
   <thead><tr><th></th><th class="src">Source</th><th>Message</th></tr></thead>
   <tbody>
    <tr><td><svg width="10" height="10"><circle cx="5" cy="5" r="5" fill="#1668b0"/><path d="M5 2v1.500M5 4.500V8" stroke="#fff" stroke-width="1.500"/></svg></td><td>System</td><td class="info">12-0005 Time-Sync: Deactivating software time synchronization. (HW-Sync active for all channe...</td></tr>
    <tr><td><svg width="10" height="10"><circle cx="5" cy="4" r="3.500" fill="#555"/></svg></td><td>System</td><td>Start of measurement 11:10:11.240 pm</td></tr>
    <tr><td><svg width="10" height="10"><circle cx="5" cy="5" r="5" fill="#1668b0"/><path d="M5 2v1.500M5 4.500V8" stroke="#fff" stroke-width="1.500"/></svg></td><td>System</td><td class="info">01-0003 CAN 1 (Classical CAN)  real bus with 500000 BPS.</td></tr>
    <tr><td><svg width="10" height="10"><circle cx="5" cy="4" r="3.500" fill="#555"/></svg></td><td>System</td><td>End of measurement 11:10:14.718 pm</td></tr>
   </tbody>
  </table>
  <div class="gripcol border-0 position-absolute start-0 top-0 bottom-0 d-flex flex-column align-items-start justify-content-center gap-2 pt-4"><svg width="4" height="8"><use href="#gr"/></svg><span class="gripdots"></span><svg width="4" height="8"><use href="#gr"/></svg></div>
 </div>
</section>

<nav class="btabs d-flex align-items-center flex-shrink-0"><a href="#" class="on">Overview</a><a href="#">System</a><a href="#">Program / Model</a><a href="#">Test</a>
 <span class="ms-auto d-flex pager"><button aria-label="Previous"><svg width="8" height="10"><use href="#lt"/></svg></button><button aria-label="Next"><svg width="8" height="10"><use href="#rt"/></svg></button></span></nav>
<nav class="dtabs d-flex align-items-start"><a href="#">Trace</a><a href="#" class="on">Configuration</a><a href="#">Analysis</a><a href="#" aria-label="New desktop"><svg width="14" height="13"><path d="M1.500 3v8.500h11V2H6" fill="none" stroke="#1f7fb5" stroke-width="1.500"/><path d="M7 1h6v3H7z" fill="#3a9bd0"/><circle cx="3" cy="2" r="2.500" fill="#f4e23a"/></svg></a>
 <span class="ms-auto d-flex pager pe-1 pt-px"><button aria-label="Previous"><svg width="8" height="10"><use href="#lt"/></svg></button><button aria-label="Next"><svg width="8" height="10"><use href="#rt"/></svg></button></span></nav>

<footer class="statusbar d-flex align-items-center">
 <input type="text" aria-label="Status" readonly>
 <span class="vsep ms-1"></span><span class="w54 me-1"></span>
 <svg width="15" height="14"><path d="M.500.500h14v6H.500zM5 .500v6M10 .500v6M0 3.500h15" fill="none" stroke="#999"/><path d="M3 9H1v4h2M4.500 13V9h2v4M8 13V9h2v2H8M12 9v4h2" fill="none" stroke="#999"/></svg>
 <span class="vsep ms-1"></span>
 <span class="cell"><svg width="10" height="14"><rect width="10" height="13" rx="3" fill="#333"/><path d="M1 3.500q4 2 8 0" fill="none" stroke="#888"/></svg></span>
 <span class="cell"><svg width="16" height="14"><path d="M.500.500h13v9H.500z" fill="#fff" stroke="#888"/><path d="M0 0h13v3H0z" fill="#1f6fae"/><path d="M13 3l2 1-5 9-2 1v-3z" fill="#174f86"/></svg></span>
 <span class="cell cell-lg"><svg width="14" height="14"><circle cx="7" cy="7" r="7" fill="#a5163c"/><path d="M3 6q4-5 8 0M11 8q-4 5-8 0M3 7h8" fill="none" stroke="#fff" stroke-width="1.500"/></svg></span>
 <span class="ms-auto clock d-flex align-items-center"><span>0:00:00:03</span><i class="caret ms-2"></i></span>
</footer>

<footer class="taskbar d-flex align-items-center">
 <button class="tb" aria-label="Start"><svg width="16" height="16"><path d="M0 0h7.500v7.500H0zM8.500 0H16v7.500H8.500zM0 8.500h7.500V16H0zM8.500 8.500H16V16H8.500z" fill="#fff"/></svg></button>
 <button class="tb" aria-label="Search"><svg width="18" height="18"><circle cx="11" cy="6.500" r="5.500" fill="none" stroke="#fff" stroke-width="1.300"/><path d="M7 10.500L1 17" stroke="#fff" stroke-width="1.300"/></svg></button>
 <button class="tb" aria-label="Task view"><svg width="17" height="16"><path d="M1 1v2.500h10V1M1 15v-2.500h10V15M1.500 5.500h9v5h-9zM14.500 1v14" fill="none" stroke="#fff" stroke-width="1.200"/><path d="M13 5h3v3h-3z" fill="#fff"/></svg></button>
 <button class="tb" aria-label="Everything"><svg width="24" height="24"><circle cx="14" cy="9" r="7" fill="none" stroke="#ff7a00" stroke-width="3.500"/><path d="M9 14l-7 8" stroke="#ff7a00" stroke-width="4"/></svg></button>
 <button class="tb" aria-label="Edge"><svg width="24" height="24"><circle cx="12" cy="12" r="11.500" fill="#1278c9"/><path d="M.500 11Q2 1 12 .500T23.500 11q0 5-6 5t-4-3q1-5-5-5T.500 14z" fill="#3ec6a8"/><path d="M9 13q0 8 10 7-5 5-12 1T4 11q5-3 5 2z" fill="#0b4d95"/><path d="M9 12q0-3 3-3t2 4 7 3q-8 4-12-4z" fill="#e9f5fb"/></svg></button>
 <button class="tb" aria-label="Paint"><svg width="24" height="24"><path d="M10 6Q1 7 1 14t8 8q4 0 3-4t5-4 3-4-10-4z" fill="#dfe7ec"/><circle cx="6" cy="11" r="2" fill="#e2483d"/><circle cx="5" cy="16" r="2" fill="#3a9bd8"/><circle cx="11" cy="9.500" r="1.800" fill="#7ac143"/><circle cx="9" cy="19" r="1.500" fill="#f0b51c"/><path d="M21 1l2 2-8 14-3-2z" fill="#cda96a"/></svg></button>
 <button class="tb" aria-label="File Explorer"><svg width="22" height="20"><path d="M0 1h8l2 2h12v16H0z" fill="#e9a92c"/><path d="M0 5h22v14H0z" fill="#fbd66b"/><path d="M4 19v-7h14v7h-3v-4H7v4z" fill="#4497d8"/></svg></button>
 <button class="tb" aria-label="Recorder"><svg width="20" height="24"><circle cx="10" cy="15" r="6.500" fill="none" stroke="#fff" stroke-width="3"/><path d="M2 6q8-7 16 0" fill="none" stroke="#fff" stroke-width="2.500"/></svg></button>
 <button class="tb" aria-label="Calculator"><svg width="18" height="24"><path d="M0 0h18v24H0z" fill="#fff"/><path d="M3 3h12v4H3z" fill="#20363b"/><path d="M3 11.500h12M3 15.500h12M3 19.500h12" stroke="#20363b" stroke-width="2" stroke-dasharray="3 1.500"/></svg></button>
 <button class="tb" aria-label="Notepad++"><svg width="22" height="24"><path d="M1 2h17v21H1z" fill="#f5f8ef" stroke="#9a9"/><path d="M2 17h15v5H2z" fill="#8ac53a"/><path d="M5 7v8M5 8h3v7M10 11h3M14 11h3" stroke="#2b4a1b" fill="none" stroke-width="1.500"/><path d="M19 1l2 1-8 14-2 1z" fill="#d7b236"/></svg></button>
 <button class="tb" aria-label="PowerPoint"><svg width="24" height="22"><circle cx="13" cy="11" r="10.500" fill="#e0563a"/><path d="M13 .500A10.500 10.500 0 0 1 23.500 11H13z" fill="#f59a82"/><path d="M0 5h12v12H0z" fill="#b9301c"/><path d="M4.500 15V7.500h2.500a2 2 0 0 1 0 4.500H4.500" fill="none" stroke="#fff" stroke-width="1.800"/></svg></button>
 <button class="tb" aria-label="OBS"><svg width="24" height="24"><circle cx="12" cy="12" r="10.500" fill="#222" stroke="#ddd" stroke-width="1.500"/><path d="M11 4q-4 4 1 7M12 12q-6-1-7 4M13 12q5-2 6-6" fill="none" stroke="#ddd" stroke-width="1.500"/><circle cx="17" cy="18" r="5.500" fill="#e8101c"/></svg></button>
 <button class="tb on" aria-label="CANoe"><svg width="24" height="24"><path d="M3 22Q1 10 12 9q2-6 11-7-2 11-8 13-3 7-12 7z" fill="#2ba83a"/><path d="M3 3l18 18" stroke="#d5dcdc" stroke-width="1.500"/><path d="M1 1l5 2-1 3zM23 23l-5-2 1-3z" fill="#d5dcdc"/><circle cx="13" cy="12" r="3" fill="#14702a"/></svg></button>
 <button class="tb" aria-label="Editor"><svg width="24" height="22"><path d="M1 1h20v20H1z" fill="#e9f1f6"/><path d="M1 1h20v5H1z" fill="#2e8fd0"/><path d="M1 12h10v9H1z" fill="#8cc5e8"/><path d="M20 3l3 2-8 15-4 2 1-5z" fill="#f2c230" stroke="#345"/></svg></button>
 <div class="tray ms-auto d-flex align-items-center">
  <span class="cell"><svg width="14" height="8"><path d="M1 7l6-5 6 5" fill="none" stroke="#fff" stroke-width="1.500"/></svg></span>
  <span class="cell"><svg width="14" height="16"><path d="M2 4.500h6v7H2zM8 7l4-2v6L8 9M2 2q4-2 8 0M2 14q4 2 8 0" fill="none" stroke="#fff" stroke-width="1.200"/></svg></span>
  <span class="cell"><svg width="12" height="17"><rect x="3" width="6" height="10" rx="1" fill="#fff"/><path d="M1 8v4h10V8M6 12v4M3 16h6" fill="none" stroke="#fff" stroke-width="1.300"/></svg></span>
  <span class="cell"><svg width="17" height="13"><path d="M5.500 4.500h10v7h-10z" fill="none" stroke="#fff"/><path d="M7 6h7v4H7z" fill="#fff"/><path d="M1 1v3h4V1M3 4v4h3" fill="none" stroke="#fff"/></svg></span>
  <span class="cell"><svg width="17" height="17"><circle cx="8" cy="8" r="7.300" fill="none" stroke="#fff"/><ellipse cx="8" cy="8" rx="3.500" ry="7.300" fill="none" stroke="#fff"/><path d="M1 5.500h14M1 10.500h14" stroke="#fff"/><circle cx="13" cy="13" r="3.500" fill="#1a2540" stroke="#fff"/><path d="M11 15l4-4" stroke="#fff"/></svg></span>
  <span class="cell"><svg width="17" height="13"><path d="M1 4.500h3l3.500-3v10L4 8.500H1z" fill="none" stroke="#fff"/><path d="M10 4q2 2.500 0 5M12 2.500q3.500 4 0 8M14 1q4.500 5.500 0 11" fill="none" stroke="#fff"/></svg></span>
  <span class="cell">A</span>
  <button class="cell note" aria-label="Notifications"><svg width="26" height="24"><path d="M2 2h16v13H9l-4 4v-4H2z" fill="#fff"/><path d="M5 5.500h10M5 8.500h10M5 11.500h6" stroke="#1a2540"/><circle cx="17.500" cy="15.500" r="7.500" fill="#3c4250" stroke="#8a8f99"/><path d="M15.500 13.500l2.500-2V20" fill="none" stroke="#fff" stroke-width="1.500"/></svg></button>
 </div>
</footer>

<svg class="ink" width="1200" height="480"><path d="M1031 296l7-12-1-20-5-19-6-8-20-12-42-19h-50l-27 8-31 12-19 16-22 28-6 10-2 15v26l4 11 23 11 31 14 23 9 34 1 45-7 36-12 27-16 26-25 17-19-1-5" fill="none" stroke="#e30613" stroke-width="6" stroke-linejoin="round" stroke-linecap="round"/></svg>
<div class="wm text-center" aria-hidden="true">
 <div class="logo d-flex justify-content-center">
  <svg width="108" height="108" class="me-n1"><path d="M103 103H54A49 49 0 1 1 103 54z" fill="none" stroke="#fff" stroke-width="11"/><path d="M35 36l68 66M73 28L59 57M39 76h34" fill="none" stroke="#fff" stroke-width="10" stroke-linecap="round"/></svg>
  <span class="word d-flex"><span>inf</span><span>learn</span></span>
 </div>
 <div class="num">1375803</div>
 <div>실무자가 알려주는 <span class="lat">CANoe - CAPL</span>과 <span class="lat">Panel</span> 기본 사용법</div>
 <div>존버매니아</div>
</div>
</div>
</div>
</body>
</html>
